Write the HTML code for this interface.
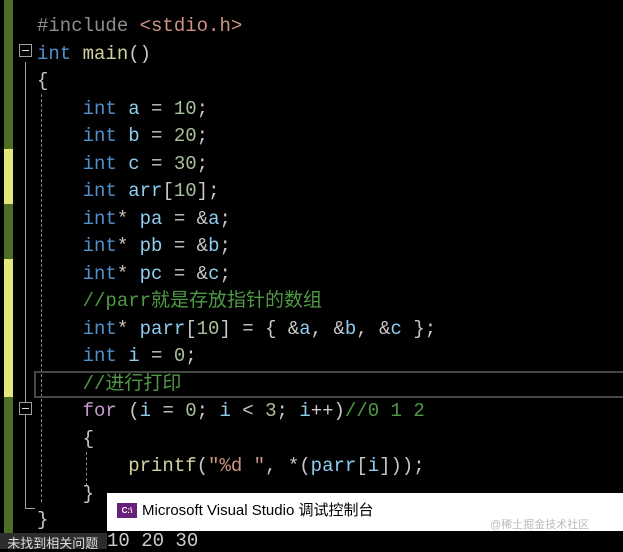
<!DOCTYPE html>
<html><head><meta charset="utf-8"><style>
body{margin:0;width:623px;height:549px;background:#000;overflow:hidden;position:relative;font-family:"Liberation Mono","Noto Sans CJK SC",monospace}
.l{position:absolute;left:37px;font-size:19px;line-height:27.5px;height:27.5px;white-space:pre;color:#c8c8c8;}
.k{color:#4f8fcc}.v{color:#8fcdf0}.n{color:#aac09a}.f{color:#d2d2a0}.c{color:#4f9a44}.p{color:#c896cf}.s{color:#cc9480}.g{color:#8e8e8e}
.bar{position:absolute;left:4px;width:9px}
</style></head><body>
<div class="bar" style="top:0;height:149px;background:#4e6e26"></div>
<div class="bar" style="top:149px;height:55px;background:#e6e67a"></div>
<div class="bar" style="top:204px;height:55px;background:#4e6e26"></div>
<div class="bar" style="top:259px;height:138px;background:#e6e67a"></div>
<div class="bar" style="top:397px;height:152px;background:#4e6e26"></div>
<div style="position:absolute;left:25px;top:62px;width:1px;height:446px;background:#a0a0a0"></div>
<div style="position:absolute;left:25px;top:508px;width:10px;height:1px;background:#a0a0a0"></div>
<div style="position:absolute;left:19px;top:44px;width:11px;height:11px;border:1px solid #a0a0a0;background:#000"><div style="position:absolute;left:2px;top:5px;width:7px;height:1px;background:#ddd"></div></div>
<div style="position:absolute;left:19px;top:402px;width:11px;height:11px;border:1px solid #a0a0a0;background:#000"><div style="position:absolute;left:2px;top:5px;width:7px;height:1px;background:#ddd"></div></div>
<div style="position:absolute;left:41px;top:94px;width:0;height:408px;border-left:1px dashed #808080"></div>
<div style="position:absolute;left:86px;top:452px;width:0;height:34px;border-left:1px dashed #808080"></div>
<div style="position:absolute;left:34px;top:371px;width:600px;height:23px;border:2px solid #464646"></div>
<div class="l" style="top:13px"><span class="g">#include</span> <span class="s">&lt;stdio.h&gt;</span></div>
<div class="l" style="top:40.5px"><span class="k">int</span> <span class="f">main</span>()</div>
<div class="l" style="top:68px">{</div>
<div class="l" style="top:95.5px">    <span class="k">int</span> <span class="v">a</span> = <span class="n">10</span>;</div>
<div class="l" style="top:123px">    <span class="k">int</span> <span class="v">b</span> = <span class="n">20</span>;</div>
<div class="l" style="top:150.5px">    <span class="k">int</span> <span class="v">c</span> = <span class="n">30</span>;</div>
<div class="l" style="top:178px">    <span class="k">int</span> <span class="v">arr</span>[<span class="n">10</span>];</div>
<div class="l" style="top:205.5px">    <span class="k">int</span>* <span class="v">pa</span> = &amp;<span class="v">a</span>;</div>
<div class="l" style="top:233px">    <span class="k">int</span>* <span class="v">pb</span> = &amp;<span class="v">b</span>;</div>
<div class="l" style="top:260.5px">    <span class="k">int</span>* <span class="v">pc</span> = &amp;<span class="v">c</span>;</div>
<div class="l" style="top:288px">    <span class="c">//parr就是存放指针的数组</span></div>
<div class="l" style="top:315.5px">    <span class="k">int</span>* <span class="v">parr</span>[<span class="n">10</span>] = { &amp;<span class="v">a</span>, &amp;<span class="v">b</span>, &amp;<span class="v">c</span> };</div>
<div class="l" style="top:343px">    <span class="k">int</span> <span class="v">i</span> = <span class="n">0</span>;</div>
<div class="l" style="top:370.5px">    <span class="c">//进行打印</span></div>
<div class="l" style="top:398px">    <span class="p">for</span> (<span class="v">i</span> = <span class="n">0</span>; <span class="v">i</span> &lt; <span class="n">3</span>; <span class="v">i</span>++)<span class="c">//0 1 2</span></div>
<div class="l" style="top:425.5px">    {</div>
<div class="l" style="top:453px">        <span class="f">printf</span>(<span class="s">"%d "</span>, *(<span class="v">parr</span>[<span class="v">i</span>]));</div>
<div class="l" style="top:480.5px">    }</div>
<div class="l" style="top:507px">}</div>
<div style="position:absolute;left:107px;top:493px;width:516px;height:38px;background:#fff"></div>
<div style="position:absolute;left:117px;top:503px;width:20px;height:15px;background:#68217a;color:#fff;font:bold 8px 'Liberation Sans',sans-serif;line-height:15px;text-align:center">C:\</div>
<div style="position:absolute;left:142px;top:500px;font:15px 'Liberation Sans','Noto Sans CJK SC',sans-serif;color:#000;line-height:22px">Microsoft Visual Studio 调试控制台</div>
<div style="position:absolute;left:490px;top:516px;font:11px 'Liberation Sans','Noto Sans CJK SC',sans-serif;color:#bbb">@稀土掘金技术社区</div>
<div style="position:absolute;left:107px;top:530px;font:19px 'Liberation Mono',monospace;color:#ccc;line-height:22px">10 20 30</div>
<div style="position:absolute;left:0;top:533px;width:107px;height:16px;background:#2d2d2d;color:#ddd;font:13px 'Liberation Sans','Noto Sans CJK SC',sans-serif;line-height:22px;white-space:nowrap;overflow:hidden">&nbsp;&nbsp;未找到相关问题</div>
</body></html>
